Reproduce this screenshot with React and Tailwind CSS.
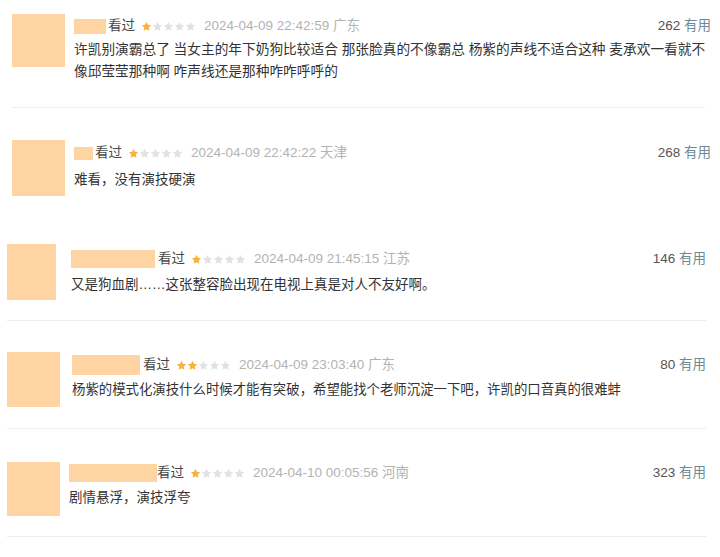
const FONT = { fontFamily: '"Liberation Sans", "Noto Sans CJK SC", sans-serif' };

function Star({ on }) {
  return (
    <svg viewBox="0 0 24 24" className="w-[11px] h-[11px]">
      <path
        d="M12 1.8l3.1 6.6 7.1.9-5.2 4.9 1.3 7.1L12 17.8l-6.3 3.5 1.3-7.1-5.2-4.9 7.1-.9z"
        fill={on ? "#f5b43c" : "#e2e2e2"}
      />
    </svg>
  );
}

function Stars({ n }) {
  return (
    <span className="flex items-center ml-[6px] mr-[8px]">
      {[0, 1, 2, 3, 4].map((i) => (
        <Star key={i} on={i < n} />
      ))}
    </span>
  );
}

const cards = [
  {
    wrap: "h-[108px] pt-[14px] pl-[12px] pr-[9px]",
    avatar: "w-[53px] h-[53px] mr-[9px]",
    head: "mt-[4px] h-[16px]",
    name: "w-[32px] h-[15px] mr-[2px]",
    text: "mt-[5px] text-[13.7px] leading-[22px]",
    line: "w-[693px]",
    stars: 1,
    date: "2024-04-09 22:42:59 广东",
    useful: "262",
    body: "许凯别演霸总了 当女主的年下奶狗比较适合 那张脸真的不像霸总 杨紫的声线不适合这种 麦承欢一看就不像邱莹莹那种啊 咋声线还是那种咋咋呼呼的",
  },
  {
    wrap: "h-[122px] pt-[32px] pl-[12px] pr-[9px]",
    avatar: "w-[53px] h-[56px] mr-[9px]",
    head: "mt-[6px] h-[14px]",
    name: "w-[19px] h-[13px] mr-[2px]",
    text: "mt-[9px] text-[13.5px] leading-[22px]",
    line: null,
    stars: 1,
    date: "2024-04-09 22:42:22 天津",
    useful: "268",
    body: "难看，没有演技硬演",
  },
  {
    wrap: "h-[91px] pt-[14px] pl-[7px] pr-[14px]",
    avatar: "w-[49px] h-[56px] mr-[15px]",
    head: "mt-[6px] h-[18px]",
    name: "w-[84px] h-[18px] mr-[3px]",
    text: "mt-[6px] text-[13.5px] leading-[22px]",
    line: "w-[699px]",
    stars: 1,
    date: "2024-04-09 21:45:15 江苏",
    useful: "146",
    body: "又是狗血剧……这张整容脸出现在电视上真是对人不友好啊。",
  },
  {
    wrap: "h-[108px] pt-[31px] pl-[7px] pr-[14px]",
    avatar: "w-[53px] h-[55px] mr-[12px]",
    head: "mt-[3px] h-[20px]",
    name: "w-[68px] h-[20px] mr-[3px]",
    text: "mt-[4px] text-[13.4px] leading-[22px]",
    line: "w-[699px]",
    stars: 2,
    date: "2024-04-09 23:03:40 广东",
    useful: "80",
    body: "杨紫的模式化演技什么时候才能有突破，希望能找个老师沉淀一下吧，许凯的口音真的很难蚌",
  },
  {
    wrap: "h-[108px] pt-[33px] pl-[7px] pr-[14px]",
    avatar: "w-[53px] h-[54px] mr-[9px]",
    head: "mt-[2px] h-[18px]",
    name: "w-[88px] h-[18px] mr-[0px]",
    text: "mt-[5px] text-[13.5px] leading-[22px]",
    line: "w-[699px]",
    stars: 1,
    date: "2024-04-10 00:05:56 河南",
    useful: "323",
    body: "剧情悬浮，演技浮夸",
  },
];

function Card({ c }) {
  return (
    <div className={`flex flex-col ${c.wrap}`}>
      <div className="flex items-start">
        <div className={`shrink-0 bg-[#fdd4a2] ${c.avatar}`} />
        <div className="flex-1 min-w-0">
          <div className={`flex items-center justify-between ${c.head}`}>
            <div className="flex items-center text-[13.5px]">
              <span className={`bg-[#fdd4a2] ${c.name}`} />
              <span className="text-[#494949]">看过</span>
              <Stars n={c.stars} />
              <span className="text-[#b3b3b3]">{c.date}</span>
            </div>
            <div className="text-[13.5px] whitespace-nowrap">
              <span className="text-[#555]">{c.useful} </span>
              <span className="text-[#6d8a96]">有用</span>
            </div>
          </div>
          <p className={`text-[#333] ${c.text}`}>{c.body}</p>
        </div>
      </div>
      {c.line && <div className={`mt-auto h-px bg-[#ececec] ${c.line}`} />}
    </div>
  );
}

export default function App() {
  return (
    <div className="w-[720px] h-[557px] bg-white overflow-hidden" style={FONT}>
      {cards.map((c, i) => (
        <Card key={i} c={c} />
      ))}
    </div>
  );
}
